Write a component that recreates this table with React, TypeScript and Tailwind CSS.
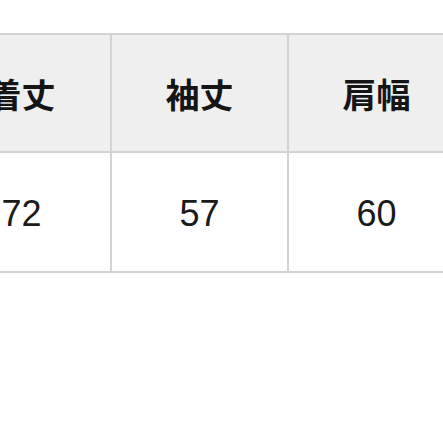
export default function App() {
  const heads = ["着丈", "袖丈", "肩幅"];
  const vals = ["72", "57", "60"];
  return (
    <div className="w-[443px] h-[443px] overflow-hidden bg-white pt-[33px]">
      <div className="ml-[-67px] w-[531px] border-y-2 border-[#d3d3d3]">
        <div className="grid grid-cols-[177px_177px_177px] bg-[#efefef] border-b-2 border-[#d3d3d3]">
          {heads.map((h, i) => (
            <div
              key={h}
              className={
                "h-[116px] flex items-center justify-center text-[34px] font-bold text-[#151515] " +
                (i > 0 ? "border-l-2 border-[#d3d3d3]" : "")
              }
              style={{ fontFamily: '"Noto Sans CJK JP", "Noto Sans", sans-serif' }}
            >
              {h}
            </div>
          ))}
        </div>
        <div className="grid grid-cols-[177px_177px_177px] bg-white">
          {vals.map((v, i) => (
            <div
              key={v}
              className={
                "h-[118px] pt-[4px] flex items-center justify-center text-[36px] text-[#1a1a1a] " +
                (i > 0 ? "border-l-2 border-[#d3d3d3]" : "")
              }
              style={{ fontFamily: '"Liberation Sans", Arial, sans-serif' }}
            >
              {v}
            </div>
          ))}
        </div>
      </div>
    </div>
  );
}
